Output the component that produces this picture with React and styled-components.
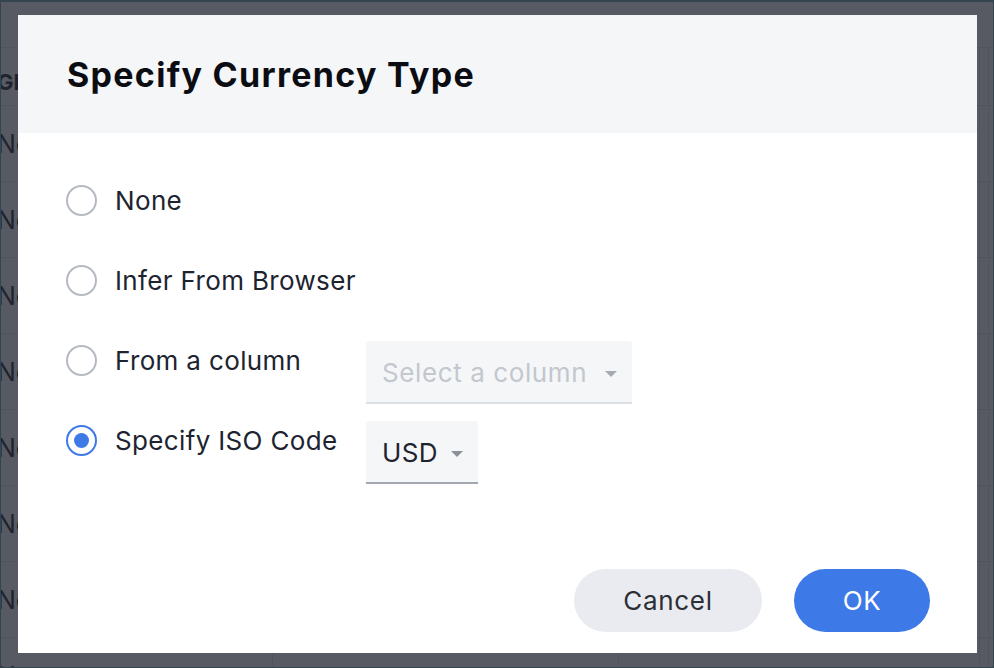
import React from 'react';
import styled, { createGlobalStyle } from 'styled-components';

const GlobalStyle = createGlobalStyle`
  html, body {
    margin: 0;
    padding: 0;
    width: 994px;
    height: 668px;
    overflow: hidden;
    font-family: Inter, "Noto Sans", "Liberation Sans", sans-serif;
  }
`;

const Page = styled.div`
  position: relative;
  width: 994px;
  height: 668px;
  box-sizing: border-box;
  border: 1px solid #33454f;
  border-top-width: 2px;
  background: #ffffff;
  overflow: hidden;
`;

const Table = styled.div`
  display: grid;
  grid-template-columns: 276px 346px 361px 9px 40px;
  margin-left: -4px;
  padding-top: 45px;
  color: #1d2430;
`;

const HeadCell = styled.div`
  height: 59px;
  display: flex;
  align-items: flex-end;
  padding-bottom: 10px;
  box-sizing: border-box;
  border-top: 1px solid #e3e5e9;
  border-bottom: 1px solid #e3e5e9;
  border-right: 1px solid #e3e5e9;
  font-size: 22px;
  font-weight: 700;
  white-space: nowrap;
  overflow: hidden;
`;

const Cell = styled.div`
  height: 76px;
  display: flex;
  align-items: center;
  box-sizing: border-box;
  border-bottom: 1px solid #e3e5e9;
  border-right: 1px solid #e3e5e9;
  font-size: 25px;
  white-space: nowrap;
  overflow: hidden;
`;

const Overlay = styled.div`
  position: absolute;
  inset: 0;
  background: rgba(31, 35, 46, 0.75);
`;

const Modal = styled.div`
  position: absolute;
  left: 17px;
  top: 13px;
  width: 959px;
  height: 638px;
  display: flex;
  flex-direction: column;
  background: #ffffff;
  color: #1d2430;
`;

const Header = styled.div`
  height: 118px;
  display: flex;
  align-items: center;
  padding: 0 49px;
  background: #f5f6f8;
`;

const Title = styled.h1`
  margin: 0;
  font-size: 34px;
  font-weight: 700;
  letter-spacing: 1.3px;
  color: #0b0d12;
`;

const Body = styled.div`
  display: grid;
  grid-auto-rows: 80px;
  padding: 47px 48px 0;
`;

const Row = styled.div`
  display: flex;
  align-items: flex-start;
`;

const Option = styled.label`
  width: 300px;
  height: 40px;
  display: flex;
  align-items: center;
  gap: 18px;
  font-size: 26px;
  letter-spacing: 0.35px;
  white-space: nowrap;
  cursor: pointer;
`;

const Radio = styled.span`
  position: relative;
  width: 31px;
  height: 31px;
  box-sizing: border-box;
  border-radius: 50%;
  border: 2px solid ${p => (p.checked ? '#3d7ae8' : '#b5b9c1')};
  background: #ffffff;
  flex-shrink: 0;

  &::after {
    content: '';
    display: ${p => (p.checked ? 'block' : 'none')};
    position: absolute;
    left: 6px;
    top: 6px;
    width: 15px;
    height: 15px;
    border-radius: 50%;
    background: #3d7ae8;
  }
`;

const Select = styled.div`
  width: ${p => p.width}px;
  height: 63px;
  margin-top: 1px;
  box-sizing: border-box;
  display: flex;
  align-items: center;
  justify-content: space-between;
  padding: 2px 15px 0 16px;
  background: #f5f6f8;
  border-radius: 3px 3px 0 0;
  border-bottom: 2px solid ${p => (p.disabled ? '#dcdfe4' : '#a2a7b0')};
  color: ${p => (p.disabled ? '#c3c7ce' : '#1d2430')};
  font-size: 26px;
  letter-spacing: ${p => (p.disabled ? '0.6px' : '0.3px')};
  white-space: nowrap;
`;

const Caret = styled.span`
  width: 0;
  height: 0;
  margin-top: 2px;
  border-left: 6px solid transparent;
  border-right: 6px solid transparent;
  border-top: 6px solid ${p => (p.disabled ? '#a6aab2' : '#8c9099')};
`;

const Footer = styled.div`
  margin-top: auto;
  display: flex;
  justify-content: flex-end;
  gap: 32px;
  padding: 0 47px 21px;
`;

const Button = styled.button`
  width: ${p => p.width}px;
  height: 63px;
  border: none;
  border-radius: 32px;
  font-family: inherit;
  font-size: 26px;
  letter-spacing: 0.7px;
  background: ${p => (p.primary ? '#3d7ae8' : '#eaebf0')};
  color: ${p => (p.primary ? '#ffffff' : '#2b2f37')};
  cursor: pointer;
`;

const options = [
  { label: 'None' },
  { label: 'Infer From Browser' },
  { label: 'From a column', select: { text: 'Select a column', width: 266, disabled: true } },
  { label: 'Specify ISO Code', select: { text: 'USD', width: 112 }, checked: true },
];

const rows = Array.from({ length: 8 });

const App = () => (
  <Page>
    <GlobalStyle />
    <Table>
      <HeadCell>GE</HeadCell>
      <HeadCell />
      <HeadCell />
      <HeadCell />
      <HeadCell />
      {rows.map((_, i) => (
        <React.Fragment key={i}>
          <Cell>No</Cell>
          <Cell />
          <Cell />
          <Cell />
          <Cell />
        </React.Fragment>
      ))}
    </Table>
    <Overlay />
    <Modal>
      <Header>
        <Title>Specify Currency Type</Title>
      </Header>
      <Body>
        {options.map(o => (
          <Row key={o.label}>
            <Option>
              <Radio checked={o.checked} />
              {o.label}
            </Option>
            {o.select && (
              <Select width={o.select.width} disabled={o.select.disabled}>
                {o.select.text}
                <Caret disabled={o.select.disabled} />
              </Select>
            )}
          </Row>
        ))}
      </Body>
      <Footer>
        <Button width={188}>Cancel</Button>
        <Button width={136} primary>OK</Button>
      </Footer>
    </Modal>
  </Page>
);

export default App;
